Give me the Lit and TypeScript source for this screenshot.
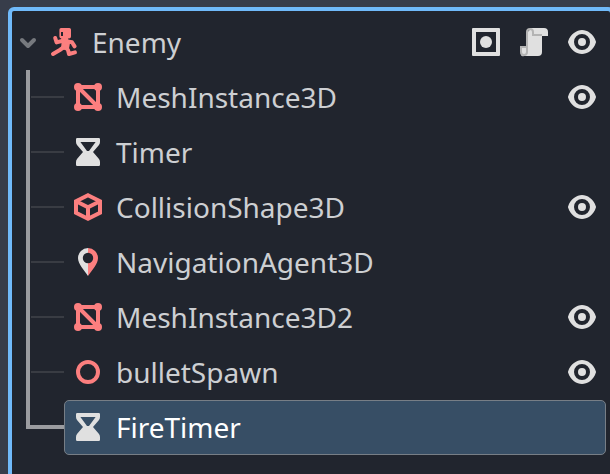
import { LitElement, html, css, svg, type TemplateResult } from "lit";
import { customElement, property } from "lit/decorators.js";
import { classMap } from "lit/directives/class-map.js";

const RED = "#fc7f7f";
const LIGHT = "#e0e0e0";

const icons: Record<string, TemplateResult> = {
  arrow: svg`<path d="M5 7l3 3 3-3" fill="none" stroke="#76797e" stroke-width="2" stroke-linecap="round" stroke-linejoin="round"/>`,
  character: svg`<g fill="none" stroke=${RED} stroke-width="2" stroke-linecap="round" stroke-linejoin="round">
      <path d="M3.6 6 4.300 8.200 7.400 7.400"/>
      <path d="M9.800 7.700 12 8.100 13.300 10.200"/>
      <path d="M7.900 10.600 5.900 12 2.500 14"/>
      <path d="M8.800 10.600 10 12 10.500 14 13.500 13.200"/>
    </g>
    <path fill=${RED} d="M6.600 6h3.400v.8l1.200.6-.6 3.400-.7 1.400-3.400-.6.300-3.800z"/>
    <path fill=${RED} fill-rule="evenodd" d="M6.500 1h4.200q.8 0 .8.8v3.400q0 1-1 1H6.600q-.9 0-.9-.9V1.900q0-.9.8-.9zM6.500 3v2h1V3z"/>`,
  mesh: svg`<g fill=${RED}><circle cx="3" cy="3" r="2"/><circle cx="13" cy="3" r="2"/><circle cx="3" cy="13" r="2"/><circle cx="13" cy="13" r="2"/></g>
    <path d="M3 3h10v10H3zl10 10" fill="none" stroke=${RED} stroke-width="2"/>`,
  timer: svg`<path fill=${LIGHT} fill-rule="evenodd" d="M2.600 1h10.800q.6 0 .6.6V3q0 .9-.6 1.600L10.500 8l2.900 3.400q.6.7.6 1.600v1.400q0 .6-.6.6H2.600q-.6 0-.6-.6V13q0-.9.6-1.600L5.500 8 2.600 4.600Q2 3.900 2 3V1.600q0-.6.6-.6zM4.200 3l3.300 4.500h1L11.800 3z"/>`,
  cube: svg`<path d="M8 2.100l6 3v5.800l-6 3-6-3V5.100zM2 5.100l6 3 6-3M8 8.100V14" fill="none" stroke=${RED} stroke-width="2"/>`,
  nav: svg`<path fill=${LIGHT} d="M8 1a5 5 0 0 0-5 5c0 3 3 6 5 9v-6.400a2.600 2.600 0 0 1 0-5.200z"/>
    <path fill=${RED} d="M8 1a5 5 0 0 1 5 5c0 3-3 6-5 9v-6.400a2.600 2.600 0 0 0 0-5.200z"/>`,
  node: svg`<circle cx="8" cy="8" r="5" fill="none" stroke=${RED} stroke-width="2"/>`,
  group: svg`<path fill=${LIGHT} fill-rule="evenodd" d="M1.500 1h13q.5 0 .5.5v13q0 .5-.5.5h-13q-.5 0-.5-.5v-13q0-.5.5-.5zM3 3v10h10V3z"/><circle cx="8" cy="8" r="3" fill=${LIGHT}/>`,
  script: svg`<path fill=${LIGHT} d="M6 1v1a1 1 0 0 0-1 1v10H4v-2H2v2a1 1 0 0 0 1 2h7a2 2 0 0 0 2-2V5h3V3a2 2 0 0 0-2-2z"/>
    <path fill="#b4b4b4" d="M6 1a2 2 0 0 0-2 2v7H1v3a2 2 0 1 0 4 0V3a1 1 0 0 1 2 0v2h5V4H8V3a2 2 0 0 0-2-2zM2 11h2v2a1 1 0 0 1-2 0z"/>`,
  eye: svg`<path fill=${LIGHT} fill-rule="evenodd" d="M8 2C5.443 2 2.209 3.948 1.045 7.705a1 1 0 0 0-.006.57C2.163 12.211 5.500 14 8 14s5.836-1.789 6.961-5.725a1 1 0 0 0 0-.55C13.861 3.935 10.557 2 8 2zm0 2a4 4 0 1 1 0 8 4 4 0 0 1 0-8zm0 2a2 2 0 1 0 0 4 2 2 0 0 0 0-4z"/>`,
};

const icon = (name: string) =>
  html`<svg class="icon" width="32" height="32" viewBox="0 0 16 16">${icons[name]}</svg>`;

interface SceneNode {
  name: string;
  icon: string;
  actions: string[];
  selected?: boolean;
}

const children: SceneNode[] = [
  { name: "MeshInstance3D", icon: "mesh", actions: ["eye"] },
  { name: "Timer", icon: "timer", actions: [] },
  { name: "CollisionShape3D", icon: "cube", actions: ["eye"] },
  { name: "NavigationAgent3D", icon: "nav", actions: [] },
  { name: "MeshInstance3D2", icon: "mesh", actions: ["eye"] },
  { name: "bulletSpawn", icon: "node", actions: ["eye"] },
  { name: "FireTimer", icon: "timer", actions: [], selected: true },
];

@customElement("tree-row")
class TreeRow extends LitElement {
  @property({ attribute: false }) node!: SceneNode;

  static styles = css`
    :host { display: block; flex: 1; min-width: 0; }
    .row {
      box-sizing: border-box;
      height: 55px;
      display: flex;
      align-items: center;
      padding: 0 7px 1px;
      border: 1px solid transparent;
      border-radius: 5px;
      color: #cdcfd2;
    }
    .selected { background: #374e65; border-color: #777e86; color: #fff; }
    .icon { display: block; flex: none; }
    .label { flex: 1; margin-left: 12px; white-space: nowrap; line-height: 38px; }
    .actions { display: flex; gap: 16px; }
  `;

  render() {
    const n = this.node;
    return html`<div class=${classMap({ row: true, selected: !!n.selected })}>
      ${icon(n.icon)}
      <span class="label">${n.name}</span>
      <div class="actions">${n.actions.map(icon)}</div>
    </div>`;
  }
}

@customElement("app-root")
class AppRoot extends LitElement {
  static styles = css`
    :host {
      display: block;
      box-sizing: border-box;
      height: 474px;
      padding: 7px 0 0 8px;
      overflow: hidden;
      background: #373d4a;
      font: 28px "Noto Sans", sans-serif;
    }
    .panel {
      box-sizing: border-box;
      width: 606px;
      height: 480px;
      border: 4px solid #70bafa;
      border-radius: 6px;
      background: #21252e;
      padding: 4px 4px 0 0;
    }
    .root { display: flex; }
    .root .icon { display: block; flex: none; margin-top: 11px; }
    .root tree-row { margin-left: -4px; }
    .branch { display: flex; }
    .guide {
      flex: none;
      width: 52px;
      height: 55px;
      display: grid;
      grid-template-columns: 14px 4px 1px 33px;
      grid-template-rows: 26px 2px 27px;
    }
    .trunk { grid-column: 2; grid-row: 1 / 4; background: #9b9ca0; }
    .twig { grid-column: 4; grid-row: 2; background: #393c43; }
    .last .guide { grid-template-rows: 25px 4px 26px; }
    .last .trunk { grid-row: 1 / 3; }
    .last .twig { grid-column: 3 / 5; background: #9b9ca0; }
  `;

  render() {
    return html`<div class="panel">
      <div class="root">
        ${icon("arrow")}
        <tree-row .node=${{ name: "Enemy", icon: "character", actions: ["group", "script", "eye"] }}></tree-row>
      </div>
      ${children.map(
        (node, i) => html`<div class=${classMap({ branch: true, last: i === children.length - 1 })}>
          <div class="guide"><div class="trunk"></div><div class="twig"></div></div>
          <tree-row .node=${node}></tree-row>
        </div>`
      )}
    </div>`;
  }
}
